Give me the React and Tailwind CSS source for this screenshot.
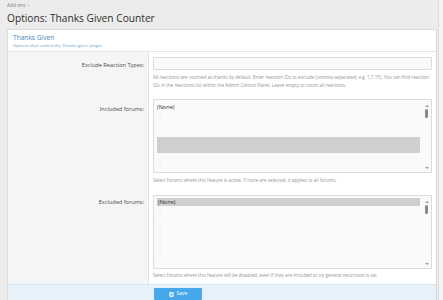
import React from "react";

const font = { fontFamily: '"Open Sans", "Noto Sans", sans-serif' };

const SelectBox = ({ children }) => (
    <div className="relative h-[74px] border border-[#dcdcdc] bg-[#fafafa] rounded-[1px] overflow-hidden">
        <div className="pl-[3px] pr-[11px] pt-[2px]">{children}</div>
        {/* scrollbar */}
        <div className="absolute right-0 top-0 bottom-0 w-[9px] flex flex-col items-center pt-[5px] pb-[3px]">
            <div className="w-0 h-0 border-l-[2px] border-r-[2px] border-b-[2px] border-l-transparent border-r-transparent border-b-[#9a9a9a]" />
            <div className="mt-[2px] w-[3px] h-[9px] rounded-full bg-[#8a8a8a]" />
            <div className="flex-1" />
            <div className="w-0 h-0 border-l-[2px] border-r-[2px] border-t-[2px] border-l-transparent border-r-transparent border-t-[#9a9a9a]" />
        </div>
    </div>
);

const Tick = ({ mt = "mt-[1px]" }) => (
    <div className={`${mt} pl-[2px] h-[5px] text-[4px] leading-[5px] text-[#d4d4d4]`}>|</div>
);

const Row = ({ label, labelTop, children }) => (
    <div className="flex">
        <div className={`w-[141px] shrink-0 bg-[#f5f5f5] border-r border-[#e4e4e4] text-right pr-[4px] text-[5.6px] text-[#4a4a4a] ${labelTop}`}>
            {label}
        </div>
        <div className="flex-1 px-[4px]">{children}</div>
    </div>
);

export default function App() {
    return (
        <div className="w-[443px] h-[300px] bg-[#ececec] overflow-hidden flex" style={font}>
            <div className="flex-1 pl-[7px] pr-[1px]">
                {/* Breadcrumb + title */}
                <div className="pt-[2px] text-[4.8px] leading-[6px] text-[#7d7d7d]">Add-ons &nbsp;›</div>
                <h1 className="mt-[3px] text-[10.2px] leading-[14px] text-[#2e2e2e]">Options: Thanks Given Counter</h1>

                {/* Panel */}
                <div className="mt-[4px] bg-white border border-[#dadada] rounded-[1px]">
                    <div className="h-[22px] px-[5px] pt-[3px] border-b border-[#e5e5e5]">
                        <div className="text-[6.6px] leading-[9px] text-[#3f88c5]">Thanks Given</div>
                        <div className="text-[4.3px] leading-[6px] text-[#5aa0d6]">Options that control the Thanks-given plugin</div>
                    </div>

                    {/* Exclude reaction types */}
                    <Row label="Exclude Reaction Types:" labelTop="pt-[9px]">
                        <div className="pt-[5px] pb-[4px]">
                            <div className="h-[13px] border border-[#dcdcdc] bg-[#fafafa] rounded-[1px]" />
                            <p className="mt-[3px] text-[4.6px] leading-[8px] text-[#949494]">
                                All reactions are counted as thanks by default. Enter reaction IDs to exclude (comma-separated, e.g. 1,7,15). You can find reaction IDs in the reactions list within the Admin Control Panel. Leave empty to count all reactions.
                            </p>
                        </div>
                    </Row>

                    {/* Included forums */}
                    <Row label="Included forums:" labelTop="pt-[12px]">
                        <div className="pt-[6px] pb-[5px]">
                            <SelectBox>
                                <div className="text-[5.6px] leading-[7px] text-[#333] pt-[2px]">(None)</div>
                                <Tick />
                                <div className="h-[20px]" />
                                <div className="h-[16px] bg-[#cfcfcf]" />
                                <Tick mt="mt-[6px]" />
                            </SelectBox>
                            <p className="mt-[3px] text-[4.6px] leading-[8px] text-[#949494]">
                                Select forums where this feature is active. If none are selected, it applies to all forums.
                            </p>
                        </div>
                    </Row>

                    {/* Excluded forums */}
                    <Row label="Excluded forums:" labelTop="pt-[9px]">
                        <div className="pt-[6px] pb-[5px]">
                            <SelectBox>
                                <div className="h-[8px] bg-[#cfcfcf] text-[5.6px] leading-[8px] text-[#333] pl-[1px]">(None)</div>
                                <Tick mt="mt-[2px]" />
                                <div className="h-[9px]" />
                                <Tick mt="mt-[1px]" />
                                <Tick mt="mt-[3px]" />
                                <Tick mt="mt-[3px]" />
                                <Tick mt="mt-[3px]" />
                            </SelectBox>
                            <p className="mt-[2px] text-[4.6px] leading-[8px] text-[#949494]">
                                Select forums where this feature will be disabled, even if they are included or no general restriction is set.
                            </p>
                        </div>
                    </Row>

                    {/* Footer */}
                    <div className="flex h-[20px] bg-[#e6f1fa] border-t border-[#d6e4ef]">
                        <div className="w-[141px] shrink-0" />
                        <div className="pl-[5px] pt-[3px]">
                            <button className="w-[48px] h-[12px] bg-[#47a7eb] rounded-[1px] text-white text-[5px] flex items-center justify-center gap-[3px]">
                                <svg width="5" height="5" viewBox="0 0 10 10" fill="none" stroke="white" strokeWidth="1.2">
                                    <rect x="1" y="1" width="8" height="8" rx="1" />
                                    <rect x="3" y="1" width="4" height="3" />
                                    <rect x="2.5" y="6" width="5" height="3" />
                                </svg>
                                Save
                            </button>
                        </div>
                    </div>
                </div>
            </div>
            {/* page scrollbar */}
            <div className="w-[5px] bg-[#f3f3f3] border-l border-[#dedede]" />
        </div>
    );
}
